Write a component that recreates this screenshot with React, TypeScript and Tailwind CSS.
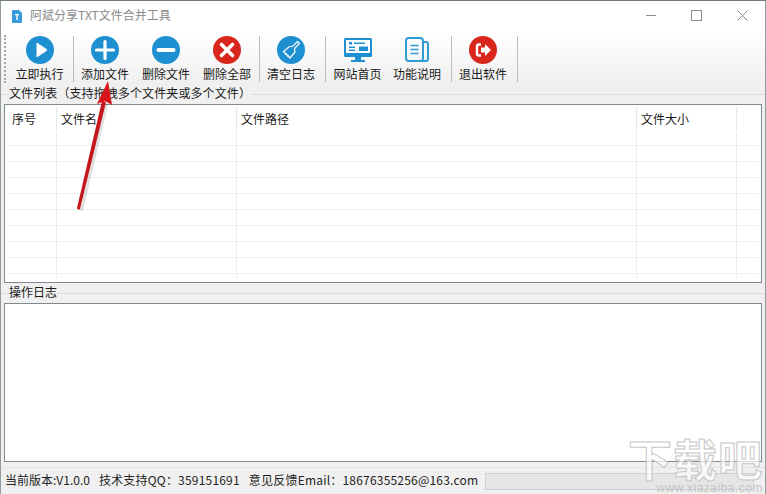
const cjk = "font-['Noto_Sans_CJK_SC','Liberation_Sans',sans-serif]"

function Circle({color, children}: {color: string; children: React.ReactNode}) {
    return <svg width="28" height="28" viewBox="0 0 28 28">
        <circle cx="14" cy="14" r="14" fill={color}/>
        {children}
    </svg>
}

const tools = [
    {label: '立即执行', cls: 'w-[67px]', icon: <Circle color="#1e90d2"><path d="M10.5 7.5Q10.5 6.5 11.5 7L20.5 13Q21.5 14 20.5 15L11.5 21Q10.5 21.5 10.5 20.5Z" fill="#fff"/></Circle>},
    {label: '添加文件', cls: 'w-[62px]', sep: true, icon: <Circle color="#1e90d2"><path d="M14 5.5V22.5M5.5 14H22.5" stroke="#fff" strokeWidth="3.2" strokeLinecap="round"/></Circle>},
    {label: '删除文件', cls: 'w-[60px]', icon: <Circle color="#1e90d2"><path d="M6.5 14H21.5" stroke="#fff" strokeWidth="4" strokeLinecap="round"/></Circle>},
    {label: '删除全部', cls: 'w-[62px] mr-[1px]', icon: <Circle color="#d9261c"><path d="M8.5 8.5L19.5 19.5M19.5 8.5L8.5 19.5" stroke="#fff" strokeWidth="3.6" strokeLinecap="round"/></Circle>},
    {label: '清空日志', cls: 'w-[62px] mr-[3px]', sep: true, icon: <Circle color="#1e90d2"><path d="M20.5 5.5L22.5 7.5L17.5 12.5L18 16L13 22L6.5 15.5L12.5 10.5L15.5 10.5Z" fill="none" stroke="#fff" strokeWidth="1.2"/><path d="M9.5 17L8 19M12 19L10.5 21" stroke="#fff" strokeWidth="1"/></Circle>},
    {label: '网站首页', cls: 'w-[63px]', sep: true, icon: <svg width="28" height="28" viewBox="0 0 28 28">
        <rect x="0" y="2" width="28" height="19" rx="1.5" fill="#1e90d2"/>
        <rect x="2" y="4" width="24" height="13" fill="#fff"/>
        <rect x="5" y="6" width="3" height="2.5" fill="#1e90d2"/>
        <rect x="10" y="6.5" width="11" height="1.5" fill="#1e90d2"/>
        <rect x="5" y="10.5" width="6" height="1.5" fill="#1e90d2"/>
        <rect x="5" y="13.5" width="6" height="1.5" fill="#1e90d2"/>
        <rect x="15" y="10.5" width="9" height="4.5" fill="#1e90d2"/>
        <path d="M11 21H17V24H21V26H7V24H11Z" fill="#1e90d2"/>
    </svg>},
    {label: '功能说明', cls: 'w-[56px] mr-[6px]', icon: <svg width="28" height="28" viewBox="0 0 28 28" fill="none" stroke="#2f9bd4" strokeWidth="2">
        <rect x="3" y="2" width="17" height="23" rx="3"/>
        <path d="M20 6H23Q25 6 25 8V23Q25 25 23 25H17"/>
        <path d="M7.5 9.5H15.5M7.5 13.5H15.5M7.5 17.5H15.5" strokeWidth="1.6"/>
    </svg>},
    {label: '退出软件', cls: 'w-[62px] mr-[3px]', sep: true, icon: <Circle color="#d9261c"><path d="M12 8.5H10Q8 8.5 8 10.5V17.5Q8 19.5 10 19.5H12" fill="none" stroke="#fff" strokeWidth="2.4"/><path d="M12 11.5H16V8L22 14L16 20V16.5H12Z" fill="#fff"/></Circle>},
]

const columns = [
    {label: '序号', cls: 'w-[52px] pl-[7px]'},
    {label: '文件名', cls: 'w-[180px] pl-[4px]'},
    {label: '文件路径', cls: 'w-[400px] pl-[4px]'},
    {label: '文件大小', cls: 'w-[100px] pl-[4px]'},
]

const rows = [145, 161, 177, 193, 209, 225, 241, 257, 273]

export default function App() {
    return <div className={`${cjk} relative w-[766px] h-[494px] overflow-hidden bg-[#f0f0f0] text-[12px] text-[#1a1a1a] border-t border-[#6f7a7d]`}>
        <div className="flex items-center h-[30px] bg-white pl-[12px]">
            <svg width="10" height="13" viewBox="0 0 10 13">
                <path d="M0 1Q0 0 1 0H7L10 3V12Q10 13 9 13H1Q0 13 0 12Z" fill="#3a9bdc"/>
                <path d="M3 4H7V5.2H5.7V10H4.3V5.2H3Z" fill="#fff"/>
            </svg>
            <span className="ml-[8px] text-[12px] -mt-[2px] text-[#8a8a8a]">阿斌分享TXT文件合并工具</span>
            <div className="ml-auto flex items-center text-[#8c8c8c] -mt-[2px]">
                <svg width="10" height="11" className="mr-[35px]"><path d="M0 5.5H10" stroke="currentColor"/></svg>
                <svg width="11" height="11" className="mr-[35px]"><rect x=".5" y=".5" width="10" height="10" fill="none" stroke="currentColor"/></svg>
                <svg width="11" height="11" className="mr-[18px]"><path d="M.5 .5L10.5 10.5M10.5 .5L.5 10.5" stroke="currentColor"/></svg>
            </div>
        </div>
        <div className="flex h-[58px] bg-gradient-to-b from-[#ffffff] to-[#eeeeee] pt-[4px]">
            <div className="w-[2px] h-[48px] ml-[4px] border-l-2 border-dotted border-[#a9a9a9]"/>
            {tools.map((t) => <div key={t.label} className="flex">
                {t.sep && <div className="w-px h-[46px] mt-[1px] bg-[#bdbdbd]"/>}
                <div className={`flex flex-col items-center ${t.cls}`}>
                    <div className="h-[28px] mt-[1px]">{t.icon}</div>
                    <div className="mt-[2px] leading-[16px] whitespace-nowrap">{t.label}</div>
                </div>
            </div>)}
            <div className="w-px h-[46px] mt-[1px] bg-[#bdbdbd]"/>
        </div>
        <div className="h-[15px] relative">
            <div className="absolute left-0 right-0 top-[5px] h-px bg-[#dcdcdc]"/>
            <span className="absolute left-[9px] top-[-5px] leading-[18px] bg-[#f0f0f0] whitespace-nowrap tracking-[0.1px]">文件列表（支持拖拽多个文件夹或多个文件）</span>
        </div>
        <div className="relative ml-[4px] mr-[4px] h-[179px] bg-white border border-[#828790]">
            <div className="flex h-[27px] items-center">
                {columns.map((c) => <div key={c.label} className={`h-[24px] flex items-center border-r border-[#e8e8e8] ${c.cls}`}>{c.label}</div>)}
            </div>
            {rows.map((y) => <div key={y} className="absolute left-[2px] right-[2px] h-px bg-[#eeeeee]" style={{top: y - 105}}/>)}
            {[52, 232, 632, 732].map((x) => <div key={x} className="absolute top-[28px] bottom-[3px] w-px bg-[#eeeeee]" style={{left: x - 1}}/>)}
        </div>
        <div className="h-[20px] relative">
            <div className="absolute left-0 right-0 top-[10px] h-px bg-[#dcdcdc]"/>
            <span className="absolute left-[9px] top-0 leading-[18px] bg-[#f0f0f0]">操作日志</span>
        </div>
        <div className="ml-[4px] mr-[4px] h-[159px] bg-white border border-[#828790]"/>
        <div className="flex items-center h-[24px] mt-[5px] pl-[5px] border-t border-[#e4e4e4] whitespace-nowrap text-[#222]">
            <span>当前版本:V1.0.0</span>
            <span className="ml-[9px] tracking-[0.2px]">技术支持QQ：359151691</span>
            <span className="ml-[9px] tracking-[0.2px]">意见反馈Email：18676355256@163.com</span>
        </div>
        <div className="absolute left-[485px] right-[12px] bottom-[4px] h-[17px] bg-[#e6e6e6] border border-[#d0d0d0]"/>
        <div className="absolute inset-0 border-x border-[#8f9c9e] pointer-events-none"/>
        <svg className="absolute left-0 top-0" width="766" height="494">
            <path d="M80 210L83 210L108 104L104 102Z" fill="#000" fillOpacity=".12"/>
            <path d="M77 207Q78 210 80 208L106 101L102 100Z" fill="#c4161c"/>
            <path d="M108 80L112 104L105 100L97 103Z" fill="#d8141c"/>
        </svg>
        <div className="absolute right-[3px] bottom-0 flex flex-col items-end">
            <span className="text-[44px] leading-[44px] font-bold tracking-[1px] text-white/70 [-webkit-text-stroke:1px_#c6c6c6]">下载吧</span>
            <span className="text-[12px] leading-[12px] mt-[2px] tracking-[0.5px] text-[#c4c4c4] font-['Liberation_Sans',sans-serif]">www.xiazaiba.com</span>
        </div>
    </div>
}
